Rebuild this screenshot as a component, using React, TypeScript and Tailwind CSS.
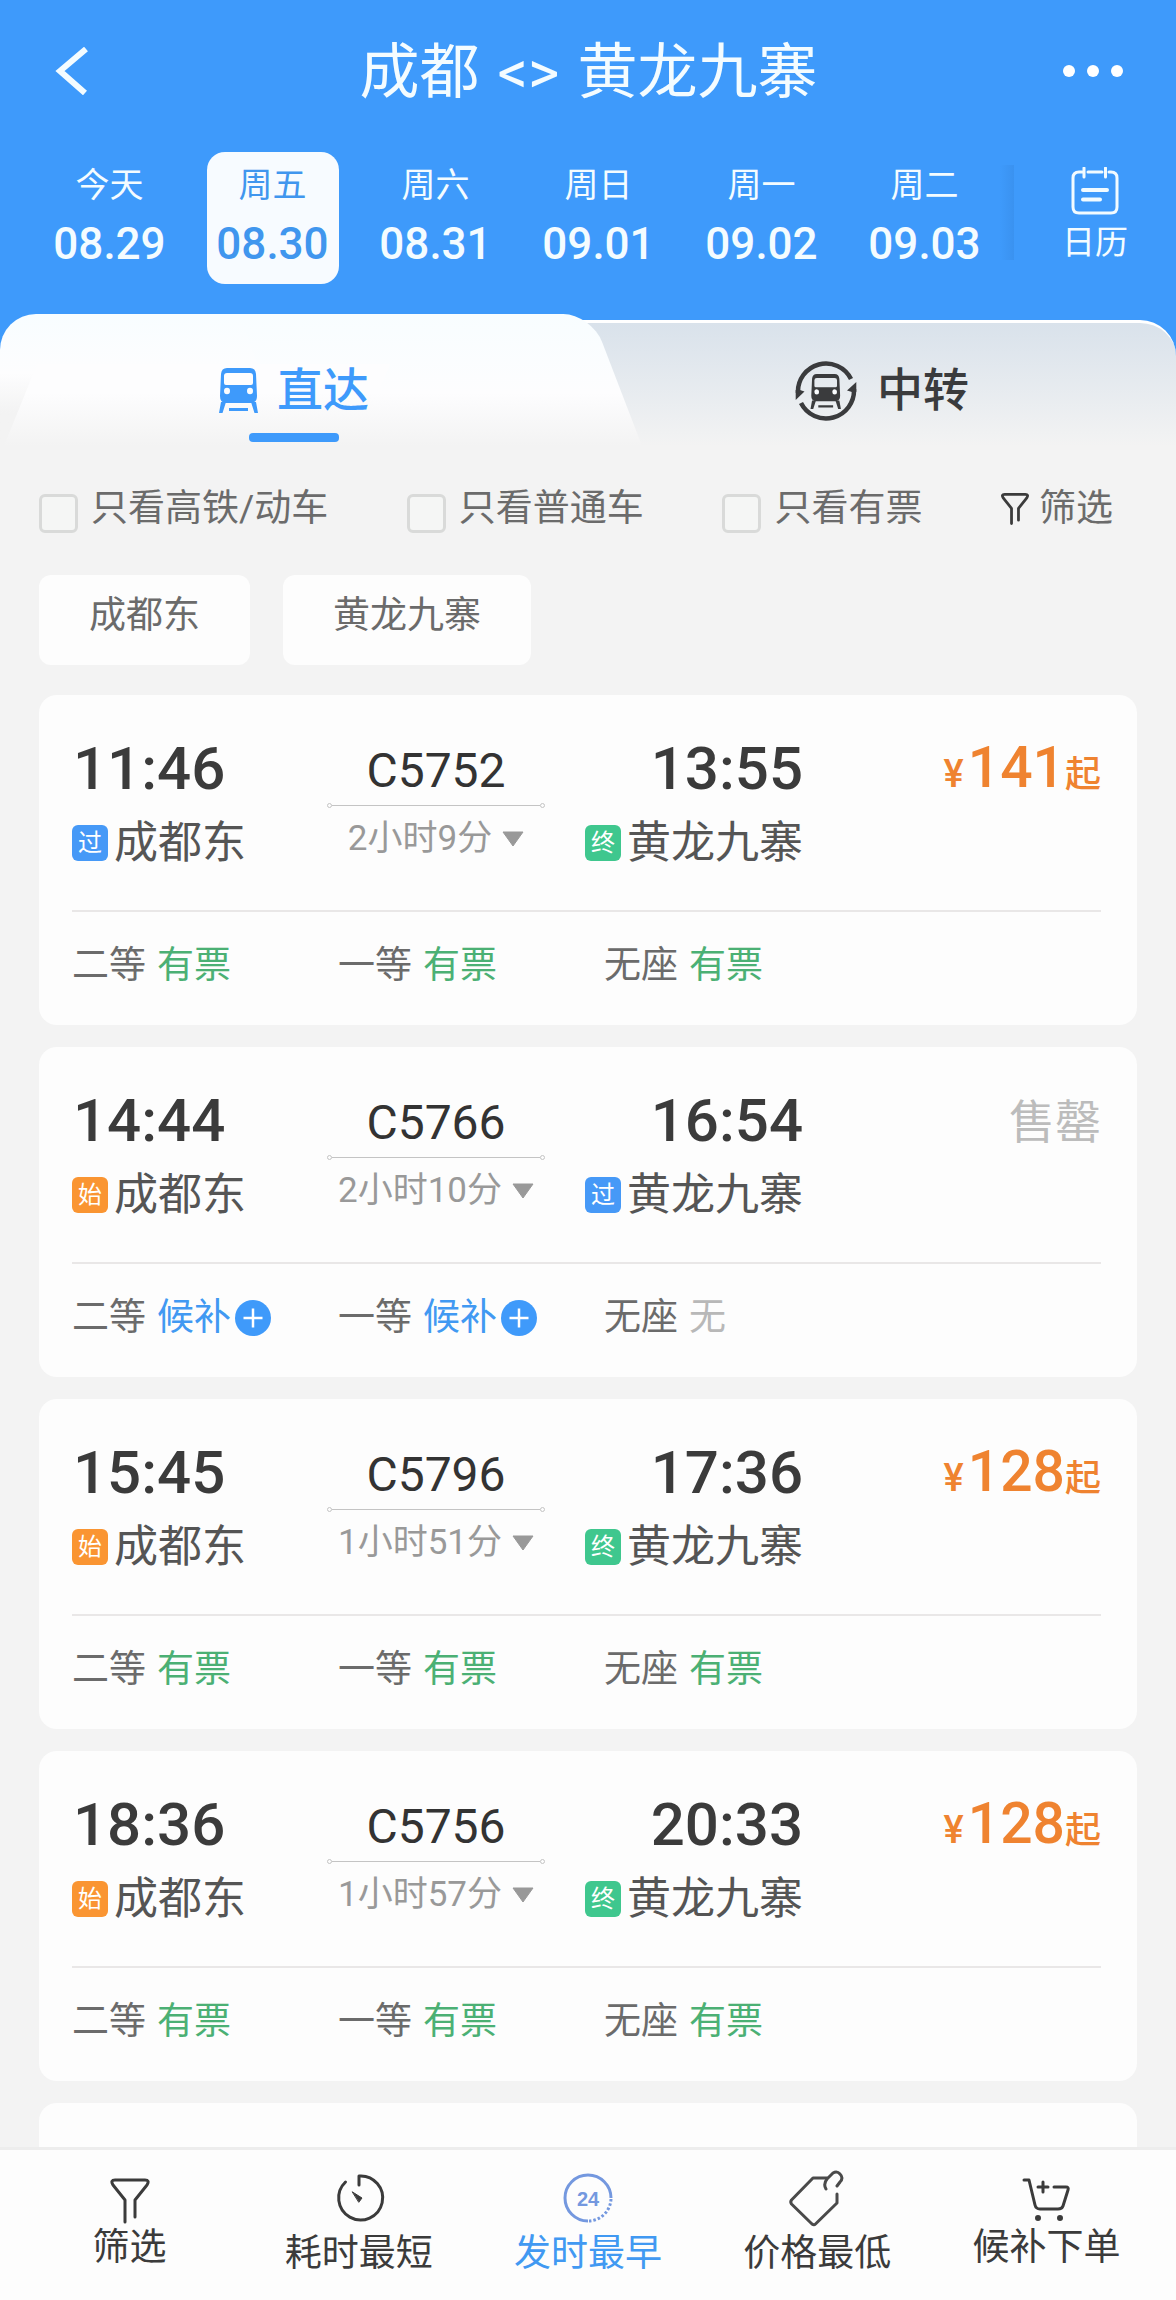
import React from "react";

type BadgeKind = "pass" | "start" | "end";
type SeatStatus = "available" | "waitlist" | "none";

interface Seat {
  name: string;
  status: SeatStatus;
}

interface Train {
  code: string;
  depart: string;
  arrive: string;
  duration: string;
  from: string;
  fromKind: BadgeKind;
  to: string;
  toKind: BadgeKind;
  price: number | null;
  seats: Seat[];
}

const seats = (a: SeatStatus, b: SeatStatus, c: SeatStatus): Seat[] => [
  { name: "二等", status: a },
  { name: "一等", status: b },
  { name: "无座", status: c },
];

const TRAINS: Train[] = [
  { code: "C5752", depart: "11:46", arrive: "13:55", duration: "2小时9分", from: "成都东", fromKind: "pass", to: "黄龙九寨", toKind: "end", price: 141, seats: seats("available", "available", "available") },
  { code: "C5766", depart: "14:44", arrive: "16:54", duration: "2小时10分", from: "成都东", fromKind: "start", to: "黄龙九寨", toKind: "pass", price: null, seats: seats("waitlist", "waitlist", "none") },
  { code: "C5796", depart: "15:45", arrive: "17:36", duration: "1小时51分", from: "成都东", fromKind: "start", to: "黄龙九寨", toKind: "end", price: 128, seats: seats("available", "available", "available") },
  { code: "C5756", depart: "18:36", arrive: "20:33", duration: "1小时57分", from: "成都东", fromKind: "start", to: "黄龙九寨", toKind: "end", price: 128, seats: seats("available", "available", "available") },
];

const DAYS = [
  { label: "今天", date: "08.29" },
  { label: "周五", date: "08.30", active: true },
  { label: "周六", date: "08.31" },
  { label: "周日", date: "09.01" },
  { label: "周一", date: "09.02" },
  { label: "周二", date: "09.03" },
];

const BADGES: Record<BadgeKind, { text: string; className: string }> = {
  pass: { text: "过", className: "bg-[#4699f7]" },
  start: { text: "始", className: "bg-[#fa9532]" },
  end: { text: "终", className: "bg-[#3fc78e]" },
};

function TrainShape() {
  return (
    <>
      <path
        fillRule="evenodd"
        d="M8 0H31Q36.500 0 37 6L38 28Q38 34 33 35H6Q1 34 1 28L2 6Q2.500 0 8 0ZM8 5Q5 5 5 8V15Q5 17 7 17H32Q34 17 34 15V8Q34 5 31 5Z"
      />
      <path d="M2 34H7L3.500 45H0ZM32 34H37L39 45H35.500ZM10 40H29V43H10Z" />
      <ellipse cx="8" cy="23" rx="3" ry="3.300" fill="#fafcfe" />
      <ellipse cx="31" cy="23" rx="3" ry="3.300" fill="#fafcfe" />
    </>
  );
}

function TrainIcon() {
  return (
    <svg viewBox="0 0 39 45" className="h-[45px] w-[39px] fill-[#3e9afb]" aria-hidden="true">
      <TrainShape />
    </svg>
  );
}

function TransferIcon() {
  return (
    <svg viewBox="0 0 62 62" className="size-[62px] fill-[#3a3b3d]" aria-hidden="true">
      <g transform="translate(15.500 14) scale(.78)">
        <TrainShape />
      </g>
      <path d="M3 33A28 28 0 0 1 56 19" fill="none" stroke="#3a3b3d" strokeWidth="4.500" />
      <path d="M59 29A28 28 0 0 1 6 43" fill="none" stroke="#3a3b3d" strokeWidth="4.500" />
      <path d="M.700 40V30H5L9.500 31.500ZM61.300 22V32H57L52 30.500Z" />
    </svg>
  );
}

function FunnelIcon({ className, width }: { className: string; width: number }) {
  return (
    <svg viewBox="0 0 40 46" className={className} fill="none" stroke="#3b3b3b" strokeWidth={width} strokeLinecap="round" strokeLinejoin="round" aria-hidden="true">
      <path d="M15 44V22L3 7Q0 2 5 2H35Q40 2 37 7L25 22V39" />
    </svg>
  );
}

function CalendarIcon() {
  return (
    <svg viewBox="0 0 48 48" className="size-12" fill="none" stroke="#f2fbff" strokeWidth="3" strokeLinecap="round" aria-hidden="true">
      <path d="M11 5H8Q2 5 2 11V40Q2 46 8 46H40Q46 46 46 40V11Q46 5 40 5H38M17 5H31M13 1V10M34.500 1V10" />
      <path d="M12 23H36M12 32.500H29" strokeWidth="4" />
    </svg>
  );
}

function ClockIcon() {
  return (
    <svg viewBox="0 0 60 61" className="h-[61px] w-[60px]" fill="none" stroke="#3b3b3b" strokeWidth="3" strokeLinecap="round" strokeLinejoin="round" aria-hidden="true">
      <path d="M30 15V6A22 22 0 1 1 16.500 12" />
      <path d="M23.500 22L33 28L30 32Z" fill="#3b3b3b" strokeWidth="1" />
    </svg>
  );
}

function Clock24Icon() {
  return (
    <svg viewBox="0 0 60 61" className="h-[61px] w-[60px]" fill="none" stroke="#7498df" strokeWidth="3" aria-hidden="true">
      <path d="M53 28A23 23 0 1 0 30 51" />
      <path d="M53 29A23 23 0 0 1 31 51" strokeDasharray="2.500 2" />
      <text x="30" y="36" textAnchor="middle" className="fill-[#7498df] font-['Liberation_Sans'] text-[20px] font-bold" stroke="none">
        24
      </text>
    </svg>
  );
}

function TagIcon() {
  return (
    <svg viewBox="0 0 60 61" className="h-[61px] w-[60px]" fill="none" stroke="#4a4a4a" strokeWidth="3" strokeLinecap="round" strokeLinejoin="round" aria-hidden="true">
      <path d="M50 24V33L28.500 54Q27 55.500 25 54L4.500 34Q3 32 4.500 30L26 8H40" />
      <path d="M39 19Q36 14 40 9L46 3Q50 .500 53 4Q57 8 53 12L50 16" />
    </svg>
  );
}

function CartIcon() {
  return (
    <svg viewBox="0 0 60 55" className="h-[55px] w-[60px]" fill="none" stroke="#3b3b3b" strokeWidth="3" strokeLinecap="round" strokeLinejoin="round" aria-hidden="true">
      <path d="M8 10H13L19 35Q20 39 24 39H42Q46 39 47 36L52 20Q53 17 50 17H38" />
      <path d="M27 12V22M22 17H32" />
      <circle cx="22" cy="48" r="1.500" fill="#3b3b3b" />
      <circle cx="44" cy="48" r="1.500" fill="#3b3b3b" />
    </svg>
  );
}

function StationName({ kind, name }: { kind: BadgeKind; name: string }) {
  const badge = BADGES[kind];
  return (
    <div className="mt-[18px] flex items-center gap-[6px] whitespace-nowrap text-[44px] leading-[52px] text-[#555]">
      <span className={`flex size-9 shrink-0 items-center justify-center rounded-md text-2xl leading-9 text-white ${badge.className}`}>{badge.text}</span>
      {name}
    </div>
  );
}

function SeatInfo({ seat }: { seat: Seat }) {
  return (
    <li className="flex items-center whitespace-nowrap">
      <span className="mr-[11px] text-[#6b6b6b]">{seat.name}</span>
      {seat.status === "available" && <span className="text-[#4bb074]">有票</span>}
      {seat.status === "none" && <span className="text-[#b8b8b8]">无</span>}
      {seat.status === "waitlist" && (
        <button type="button" className="flex items-center gap-1 text-[#4199f2]">
          候补
          <svg viewBox="0 0 36 36" className="size-9" aria-hidden="true">
            <circle cx="18" cy="18" r="18" fill="#3f9afa" />
            <path d="M8.500 18H27.500M18 8.500V27.500" stroke="#fff" strokeWidth="2.500" />
          </svg>
        </button>
      )}
    </li>
  );
}

function TrainCard({ train }: { train: Train }) {
  return (
    <article className="rounded-[18px] bg-[#fdfdfd] pr-9 pb-[33px] pl-[33px]">
      <div className="flex pt-11">
        <div className="w-[255px]">
          <time className="block pl-px text-[60px] leading-[60px] font-medium text-[#3b3b3b]">{train.depart}</time>
          <StationName kind={train.fromKind} name={train.from} />
        </div>
        <div className="flex w-[218px] flex-col items-center pt-2">
          <div className="text-5xl leading-[48px] text-[#333]">{train.code}</div>
          <div className="mt-2 flex w-full items-center">
            <span className="size-[5px] rounded-full border border-[#c4c4c4]" />
            <span className="h-px flex-1 bg-[#c4c4c4]" />
            <span className="size-[5px] rounded-full border border-[#c4c4c4]" />
          </div>
          <button type="button" className="mt-[11px] flex items-center gap-[10px] whitespace-nowrap text-[35px] leading-10 text-[#999]">
            {train.duration}
            <svg viewBox="0 0 22 16" className="h-4 w-[22px] fill-[#999]" aria-hidden="true">
              <path d="M1 1H21L11 15Z" stroke="#999" strokeLinejoin="round" />
            </svg>
          </button>
        </div>
        <div className="ml-10 w-[218px]">
          <time className="block text-right text-[60px] leading-[60px] font-medium text-[#3b3b3b]">{train.arrive}</time>
          <StationName kind={train.toKind} name={train.to} />
        </div>
        {train.price === null ? (
          <div className="ml-auto text-[46px] leading-[62px] text-[#bcbcbc]">售罄</div>
        ) : (
          <div className="ml-auto flex items-baseline self-start leading-[58px] font-medium text-[#ef8330]">
            <span className="mr-1 text-[38px]">¥</span>
            <span className="text-[57px]">{train.price}</span>
            <span className="text-4xl leading-[58px]">起</span>
          </div>
        )}
      </div>
      <ul className="mt-[41px] grid grid-cols-[266px_266px_1fr] border-t-2 border-[#e9e7e7] pt-7 text-[37px] leading-[52px]">
        {train.seats.map((seat) => (
          <SeatInfo key={seat.name} seat={seat} />
        ))}
      </ul>
    </article>
  );
}

function CheckOption({ label }: { label: string }) {
  return (
    <label className="flex items-end gap-[13px]">
      <input type="checkbox" className="size-[39px] appearance-none rounded-md border-3 border-[#d9dad9] bg-[#f5f6f5] checked:bg-[#3e9afb]" />
      <span>{label}</span>
    </label>
  );
}

function NavItem({ icon, label, active }: { icon: React.ReactNode; label: string; active?: boolean }) {
  return (
    <button type="button" className={`flex flex-col items-center text-[37px] leading-[46px] ${active ? "text-[#4199f2]" : "text-[#3b3b3b]"}`}>
      {icon}
      {label}
    </button>
  );
}

export default function App() {
  return (
    <div className="flex h-screen flex-col bg-[#f3f3f3] font-[Roboto,'Noto_Sans_CJK_SC',sans-serif]">
      <header className="bg-[#3e9afb] text-[#f4fcff]">
        <div className="flex h-[142px] items-center justify-between pr-[53px] pl-[54px]">
          <button type="button" aria-label="返回" className="w-[60px]">
            <svg viewBox="0 0 36 48" className="h-12 w-9" fill="none" stroke="#f4fcff" strokeWidth="6" aria-hidden="true">
              <path d="M32 2L6 24L31 46" />
            </svg>
          </button>
          <h1 className="flex gap-[18px] pt-1 text-6xl">
            <span>成都</span>
            <span>&lt;&gt;</span>
            <span>黄龙九寨</span>
          </h1>
          <button type="button" aria-label="更多" className="flex w-[60px] justify-between">
            <span className="size-3 rounded-full bg-white" />
            <span className="size-3 rounded-full bg-white" />
            <span className="size-3 rounded-full bg-white" />
          </button>
        </div>
        <div className="mt-[10px] flex pb-[30px]">
          <div className="grid flex-1 grid-cols-6 pr-2 pl-7">
            {DAYS.map((day) => (
              <button
                type="button"
                key={day.date}
                className={`flex h-[132px] w-[132px] flex-col items-center justify-self-center rounded-[18px] pt-[13px] ${day.active ? "bg-[#f7fbff] text-[#4096ee]" : ""}`}
              >
                <span className="text-[34px] leading-10">{day.label}</span>
                <span className="mt-[9px] text-[44px] leading-[60px] font-medium">{day.date}</span>
              </button>
            ))}
          </div>
          <div className="mt-[13px] -ml-[14px] h-[95px] w-[14px] bg-linear-to-r from-[#3e9afb] to-[#3a92f0]" />
          <button type="button" className="flex w-[162px] flex-col items-center pt-[15px]">
            <CalendarIcon />
            <span className="mt-2 text-[33px] leading-10">日历</span>
          </button>
        </div>

        <div role="tablist" className="relative isolate grid h-[132px] grid-cols-2 overflow-hidden">
          <div className="absolute inset-x-0 top-[6px] bottom-0 -z-20 rounded-t-[36px] border-t-3 border-white bg-linear-to-b from-[#d9e2eb] to-[#f3f3f3]" />
          <div className="absolute inset-y-0 left-0 -z-10 w-1/2 rounded-tl-[36px]">
            <div className="absolute inset-y-0 left-0 w-1/2 rounded-tl-[36px] bg-linear-to-b from-[#f8fdff] via-[#fdfdfe] via-45% to-[#f3f3f3] to-75%" />
            <div className="absolute top-0 -right-[54px] bottom-0 w-3/5 origin-bottom skew-x-[21deg] rounded-tr-[28px] bg-linear-to-b from-[#f8fdff] via-[#fdfdfe] via-60% to-[#f3f3f3]" />
            <div className="absolute top-[50px] bottom-0 left-1 w-3/5 origin-bottom -skew-x-[22deg] bg-linear-to-b from-[#fdfdfe] via-[#fdfdfe] via-35% to-[#f3f3f3]" />
          </div>
          <button type="button" role="tab" aria-selected="true" className="flex flex-col items-center pt-[46px] text-[46px] leading-[60px] font-medium text-[#3e9afb]">
            <span className="flex items-center gap-[19px]">
              <TrainIcon />
              直达
            </span>
            <span className="mt-[13px] h-[9px] w-[90px] rounded-sm bg-[#3e9afb]" />
          </button>
          <button type="button" role="tab" aria-selected="false" className="flex items-start justify-center gap-5 pt-[46px] text-[46px] leading-[60px] font-medium text-[#3a3b3d]">
            <TransferIcon />
            中转
          </button>
        </div>
      </header>

      <main className="min-h-0 flex-1 overflow-y-auto px-[39px] text-[#6b6b6b] [scrollbar-width:none]">
        <div className="flex items-end justify-between pt-[39px] pr-6 text-[37px] leading-[48px] whitespace-nowrap">
          <CheckOption label="只看高铁/动车" />
          <CheckOption label="只看普通车" />
          <CheckOption label="只看有票" />
          <button type="button" className="flex items-center gap-[10px]">
            <FunnelIcon className="h-8 w-7" width={4} />
            筛选
          </button>
        </div>
        <div className="mt-[42px] flex gap-[33px] text-[37px] leading-[82px]">
          <button type="button" className="rounded-xl bg-[#fdfdfd] px-[50px] pb-2">成都东</button>
          <button type="button" className="rounded-xl bg-[#fdfdfd] px-[50px] pb-2">黄龙九寨</button>
        </div>
        <section aria-label="车次列表" className="mt-[30px] flex flex-col gap-[22px]">
          {TRAINS.map((train) => (
            <TrainCard key={train.code} train={train} />
          ))}
          <article className="h-[330px] rounded-[18px] bg-[#fdfdfd]" />
        </section>
      </main>

      <nav className="grid h-[153px] shrink-0 grid-cols-5 items-start border-t-3 border-[#ededed] bg-[#fdfdfd] px-[15px] pt-5">
        <NavItem label="筛选" icon={<FunnelIcon className="mt-2 mb-px h-[46px] w-10" width={3} />} />
        <NavItem label="耗时最短" icon={<ClockIcon />} />
        <NavItem label="发时最早" icon={<Clock24Icon />} active />
        <NavItem label="价格最低" icon={<TagIcon />} />
        <NavItem label="候补下单" icon={<CartIcon />} />
      </nav>
    </div>
  );
}
